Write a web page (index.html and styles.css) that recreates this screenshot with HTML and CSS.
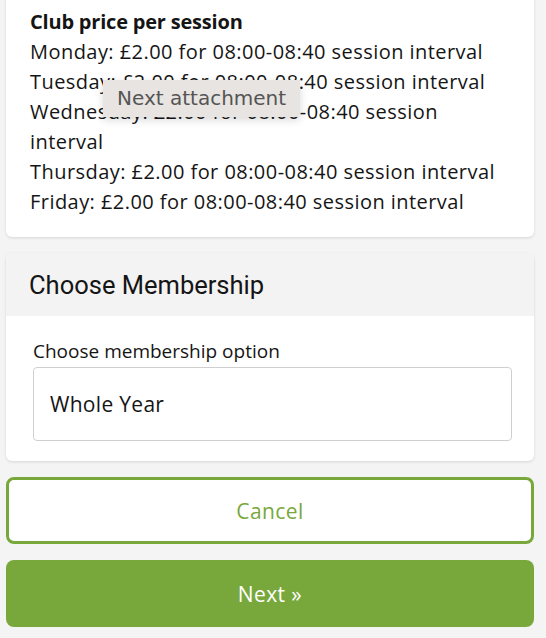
FILE: index.html
```html
<!DOCTYPE html>
<html lang="en">
<head>
  <meta charset="UTF-8" />
  <meta name="viewport" content="width=device-width, initial-scale=1.0" />
  <title>Book Session</title>
  <link rel="stylesheet" href="styles.css">
</head>
<body>
  <div class="page">
    <!-- Pricing summary -->
    <div class="card prices">
      <div class="prices-title">Club price per session</div>
      <div>Monday: £2.00 for 08:00-08:40 session interval</div>
      <div>Tuesday: £2.00 for 08:00-08:40 session interval</div>
      <div>Wednesday: £2.00 for 08:00-08:40 session interval</div>
      <div>Thursday: £2.00 for 08:00-08:40 session interval</div>
      <div>Friday: £2.00 for 08:00-08:40 session interval</div>
    </div>

    <!-- Membership choice -->
    <div class="card membership">
      <div class="card-header">Choose Membership</div>
      <div class="card-body">
        <label class="field-label" for="membership">Choose membership option</label>
        <div class="select-box" id="membership">Whole Year</div>
      </div>
    </div>

    <button class="btn btn-outline">Cancel</button>
    <button class="btn btn-primary">Next &raquo;</button>
  </div>

  <div class="tooltip">Next attachment</div>
</body>
</html>
```

FILE: styles.css
```css
body {
  margin: 0;
  padding: 0;
  background: #f4f4f4;
  font-family: 'Open Sans', 'PT Sans', sans-serif;
  color: #151515;
}
.page {
  margin-top: -13px;
  padding: 0 12px 0 6px;
  display: flex;
  flex-direction: column;
  gap: 16px;
}
.card {
  background: #fff;
  border-radius: 6px;
  box-shadow: 0 1px 3px rgba(0, 0, 0, 0.12);
  overflow: hidden;
}
.prices {
  padding: 20px 24px 20px;
  font-size: 20px;
  letter-spacing: 0.45px;
  line-height: 30px;
}
.prices-title {
  font-weight: bold;
  letter-spacing: -0.2px;
}
.card-header {
  background: #f3f3f3;
  height: 63px;
  display: flex;
  align-items: center;
  padding-left: 23px;
  font-family: 'Roboto', 'Liberation Sans', sans-serif;
  font-size: 25.5px;
}
.card-body {
  padding: 22px 22px 20px 27px;
  display: flex;
  flex-direction: column;
  gap: 3px;
}
.field-label {
  font-size: 19px;
  line-height: 26px;
}
.select-box {
  border: 1px solid #cfcfcf;
  border-radius: 4px;
  height: 72px;
  display: flex;
  align-items: center;
  padding-left: 16px;
  font-size: 21px;
  letter-spacing: 0.3px;
}
.btn {
  height: 67px;
  border-radius: 8px;
  font-family: inherit;
  font-size: 21px;
  letter-spacing: 0.4px;
  cursor: pointer;
}
.btn-outline {
  background: #fff;
  color: #78a83c;
  border: 3px solid #78a83c;
}
.btn-primary {
  background: #78a83c;
  color: #fff;
  border: none;
}
.tooltip {
  position: absolute;
  left: 103px;
  top: 80px;
  padding: 0 14px;
  height: 37px;
  line-height: 37px;
  background: #e7e4e1;
  color: #555;
  font-family: 'DejaVu Sans', sans-serif;
  font-size: 20px;
  box-shadow: 0 3px 8px rgba(0, 0, 0, 0.15);
}
```
